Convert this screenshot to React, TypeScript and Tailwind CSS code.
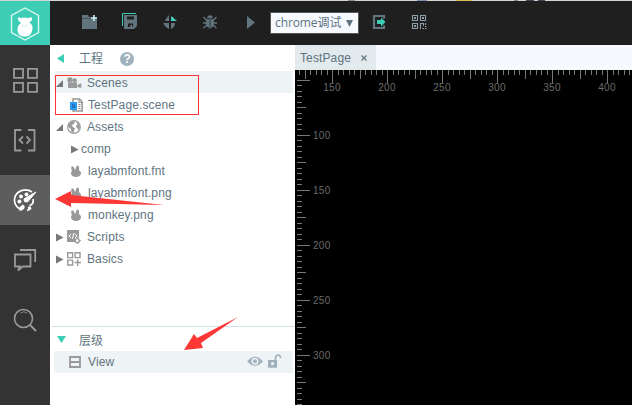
import type { ReactNode } from "react";

const range = (n: number) => Array.from({ length: n }, (_, i) => i);

function Arrow({ open }: { open?: boolean }) {
  return (
    <svg className="h-[9px] w-[8px] shrink-0" viewBox="0 0 8 9">
      <path d={open ? "M7 1V8H0Z" : "M0 0.5L7.5 4.5L0 8.5Z"} fill="#777" />
    </svg>
  );
}

function Rabbit() {
  return (
    <svg className="h-[14px] w-[14px] shrink-0" viewBox="0 0 14 14" fill="#999">
      <ellipse cx="7" cy="9.2" rx="5" ry="3.8" />
      <path d="M3.4 8C1.8 5 2 2.2 3.2 2.2C4.8 2.2 5.8 4.5 6 7ZM6.6 7C6.5 3.5 7.5 1.4 8.7 1.5C10.4 1.7 10.4 5 9.6 8Z" />
    </svg>
  );
}

function Camera() {
  return (
    <svg className="h-[14px] w-[15px] shrink-0" viewBox="0 0 15 14" fill="#999">
      <circle cx="3" cy="4" r="2.7" />
      <circle cx="7.7" cy="4.5" r="2.2" />
      <path d="M1 6.5H10V12H1ZM10.5 9L14.3 7V12L10.5 11Z" />
    </svg>
  );
}

function SceneFile() {
  return (
    <svg className="h-[14px] w-[14px] shrink-0" viewBox="0 0 14 14">
      <path d="M3 1H9.5L12.2 4V13H3Z" fill="#fff" stroke="#999" strokeWidth="1.6" />
      <path d="M9 1V4.5H12.5" fill="none" stroke="#999" strokeWidth="1.2" />
      <path d="M8.5 6.5H10.5M8.5 8.5H10.5M8.5 10.5H10.5" stroke="#888" />
      <rect y="4" width="7" height="8" fill="#2d9cf0" />
      <path d="M2.5 6V9.5H4.5V6" fill="none" stroke="#1c62a5" />
    </svg>
  );
}

function Globe() {
  return (
    <svg className="h-[14px] w-[14px] shrink-0" viewBox="0 0 14 14">
      <circle cx="7" cy="7" r="6.3" fill="#fff" stroke="#999" strokeWidth="1.2" />
      <path d="M1 5L5 1.2L8 1.5L7 4L4.5 5L6 7L8.2 8.5L7 10.5L6.5 13L4.5 12L4 9L1.5 7ZM9 2L12 4L13 7L11.5 10L10 8L8.7 6L10.5 4.8Z" fill="#999" />
    </svg>
  );
}

function Script() {
  return (
    <svg className="h-[14px] w-[14px] shrink-0" viewBox="0 0 14 14" fill="none">
      <path d="M0 0H12V8H8V12H0Z" fill="#999" />
      <path d="M4 4L1.8 6L4 8M8 4L10.2 6L8 8M7 3L5.2 9" stroke="#fff" />
      <circle cx="10.3" cy="10.7" r="2" stroke="#999" strokeWidth="1.3" />
      <path d="M10.3 7.5V9M10.3 12.5V14M7 10.7H8.5M12.3 10.7H14" stroke="#999" />
    </svg>
  );
}

function Basics() {
  return (
    <svg className="h-[14px] w-[14px] shrink-0" viewBox="0 0 14 14" fill="none" stroke="#999" strokeWidth="1.4">
      <path d="M0.7 0.7H5.6V5.6H0.7ZM8.1 0.7H13V5.6H8.1ZM0.7 8.1H5.6V13H0.7ZM7.5 10.5H14M10.7 7.5V14" />
    </svg>
  );
}

function Row({ arrow, icon, pad, gap, label, active }: { arrow?: "open" | "closed"; icon?: ReactNode; pad: string; gap: string; label: string; active?: boolean }) {
  return (
    <div className={`flex h-[22px] items-center pt-[2px] ${pad} ${active ? "bg-[#eef3f6]" : ""}`}>
      {arrow && <Arrow open={arrow === "open"} />}
      {icon && <span className={arrow ? "ml-[3px]" : ""}>{icon}</span>}
      <span className={`${gap} whitespace-nowrap`}>{label}</span>
    </div>
  );
}

function Logo() {
  return (
    <svg className="h-[34px] w-[30px]" viewBox="0 0 30 34">
      <path d="M15 1L28.5 8.5V25.5L15 33L1.5 25.5V8.5Z" fill="none" stroke="#d6f8f0" strokeWidth="1.4" />
      <path d="M8 12.5C7.2 10 9.5 9.5 11 11.2C13 10.2 16.5 10.2 18.5 11.2C20.5 9.5 23 10.5 22 12.8C21.5 14.5 20 14.5 19.5 15.5C23 18 23 21 22 24C21 28.5 18 29.5 15 29.5C11.5 29.5 8.5 28.5 7.7 24.5C7 20.5 8 18 11 16C10 14.5 8.5 14.5 8 12.5Z" fill="#fff" />
      <path d="M12 18.5Q15 20 18 18.5" fill="none" stroke="#b5efe2" strokeWidth="0.8" />
    </svg>
  );
}

function Toolbar() {
  return (
    <header className="flex h-[44px] bg-[#1f1f1f]">
      <div className="flex w-[50px] items-center justify-center bg-[#3dcdb7] pt-[1px]"><Logo /></div>
      <svg className="h-[44px] w-[220px]" viewBox="50 1 220 44">
        <path d="M82 15H88L89 17H97V29H82Z" fill="#62757f" />
        <path d="M82 18.5H91" stroke="#45545d" />
        <path d="M91 18H97M94 15V21" stroke="#c5e9f0" strokeWidth="1.7" />
        <path d="M122.5 26V13.5H136" fill="none" stroke="#3dcdb7" />
        <path d="M124 15H137V26L134 29H124Z" fill="#62757f" />
        <path d="M127 16.5H134V19.5H127ZM128 23.5H133V27H128Z" fill="#1f1f1f" />
        <path d="M130.5 25H132V27H130.5Z" fill="#7f929b" />
        <path d="M169 15V21H165Q165 20 169 15ZM163 23H169V29Q165 27 163 23ZM171 23H175Q175 27 171 29Z" fill="#62757f" />
        <path d="M171 16.5H172L177 21H171Z" fill="#3dcdb7" />
        <g fill="#62757f" stroke="#62757f">
          <path d="M207.5 17Q208 15.5 210 15.5T212.5 17V18H207.5ZM206.5 19.5H213.5V26L210 28.5L206.5 26Z" strokeWidth="0.5" />
          <path d="M203.5 17L207 20.5M216.5 17L213 20.5M203 23H217M203.5 28L207 25M216.5 28L213 25" fill="none" strokeWidth="1.4" />
          <path d="M210 20V28" stroke="#26343b" />
        </g>
        <path d="M247 16L255 22.5L247 29Z" fill="#62757f" />
      </svg>
      <div className="mt-[11px] flex h-[22px] w-[89px] items-center justify-between border border-[#56585a] bg-[#f6faff] pl-[4px] pr-[5px] text-[12px] text-[#5f747f] font-['Open_Sans','Noto_Sans_CJK_SC',sans-serif]">
        <span className="whitespace-nowrap tracking-[-0.1px]">chrome调试</span>
        <svg className="h-[7px] w-[7px]" viewBox="0 0 7 7"><path d="M0 0H7L3.5 7Z" fill="#5f747f" /></svg>
      </div>
      <svg className="h-[44px] w-[80px]" viewBox="359 1 80 44">
        <path d="M384 18.5V16H374V28H384V25.5" fill="none" stroke="#62757f" strokeWidth="2.2" />
        <path d="M377 20H381V17.5L385.5 22L381 26.5V24H377Z" fill="#3dcdb7" />
        <g fill="none" stroke="#8c9ea8" strokeWidth="1.1">
          <path d="M412.5 15.5H417.5V20.5H412.5ZM420.5 15.5H425.5V20.5H420.5ZM412.5 23.5H417.5V28.5H412.5Z" />
          <path d="M414 18H416M422 18H424M414 26H416" strokeWidth="2" />
          <path d="M420.5 29V23.5H423.5V26M425.5 23V25M425 26.5H426.5M422.5 28.5H424M425 28.5H426.5" />
        </g>
      </svg>
    </header>
  );
}

function SideNav() {
  return (
    <nav className="flex w-[50px] shrink-0 flex-col bg-[#333] pt-[5px]">
      {[
        <path key="a" d="M2 1.9H11V10.9H2ZM16 1.9H25V10.9H16ZM2 15.9H11V24.9H2ZM16 15.9H25V24.9H16Z" strokeWidth="1.8" />,
        <path key="b" d="M9.5 3H3V23.5H9.5M16 3H22.5V23.5H16M11 9.5L7.5 13L11 16.5M14.5 9.5L18 13L14.5 16.5" strokeWidth="1.8" />,
        <g key="c" stroke="#fff">
          <path d="M20 5C16 2 10 2 6 5.5C1 10 1.5 17 6.5 21C8.5 22.5 8 19.5 11 20M21 12C22 16 20 18 17.5 18.5M19 21Q17.5 23 15 23.5" strokeWidth="1.7" />
          <path d="M24 5L15.5 15L12.5 14.5L12 12Z" fill="#fff" strokeWidth="1" />
          <path d="M7 23C9 22 8 19 10.5 18C13 18 13 21 11 22.5Q9 24 7 23Z" fill="#fff" strokeWidth="0.5" />
          <g fill="#fff" stroke="none"><circle cx="7.5" cy="14.5" r="2" /><circle cx="9" cy="9.5" r="2" /><circle cx="14.5" cy="7.5" r="2" /><circle cx="17.5" cy="21" r="1.7" /></g>
        </g>,
        <path key="d" d="M8 3H23.2V15M3 7.5H18.5V19.5H11L6 23.5L8 19.5H3Z" strokeWidth="1.8" />,
        <g key="e"><circle cx="11.5" cy="11.5" r="9" strokeWidth="1.6" /><path d="M18 18L24 24" strokeWidth="2" /><path d="M8.5 6Q12 3.5 15 6" strokeWidth="0.8" /></g>,
      ].map((icon, i) => (
        <div key={i} className="flex h-[60px] items-center justify-center">
          <span className={`flex h-[50px] w-[50px] items-center justify-center ${i === 2 ? "bg-[#5d5d5d]" : ""}`}>
            <svg className="h-[26px] w-[26px]" viewBox="0 0 26 26" fill="none" stroke="#999">{icon}</svg>
          </span>
        </div>
      ))}
    </nav>
  );
}

function Ruler() {
  return (
    <svg className="block h-[335px] w-[337px] bg-black" viewBox="295 70 337 335">
      <g shapeRendering="crispEdges" fill="#777">
        {range(61).map((i) => {
          const x = Math.floor(299.5 + i * 5.5);
          const len = (i + 4) % 10 === 0 ? 13 : (i + 4) % 5 === 0 ? 9 : 5;
          return <rect key={i} x={x} y="70" width="1" height={len} />;
        })}
        {range(60).map((i) => {
          const y = Math.floor(80 + i * 5.5);
          const len = i % 10 === 0 ? 13 : i % 5 === 0 ? 9 : 5;
          return <rect key={i} x="297" y={y} width={len} height="1" />;
        })}
      </g>
      <g fill="#6b6b6b" className="text-[10px] tracking-[0.3px] font-['Liberation_Sans',sans-serif]">
        {[150, 200, 250, 300, 350, 400].map((v, i) => (
          <text key={v} x={332 + i * 55} y="91" textAnchor="middle">{v}</text>
        ))}
        {[100, 150, 200, 250, 300].map((v, i) => (
          <text key={v} x="313" y={139 + i * 55}>{v}</text>
        ))}
      </g>
    </svg>
  );
}

export default function App() {
  return (
    <div className="relative flex h-[405px] w-[632px] flex-col overflow-hidden bg-white text-[12px] tracking-[0.12px] text-[#5f747f] font-['Liberation_Sans','Noto_Sans_CJK_SC',sans-serif]">
      <div className="flex h-px shrink-0 bg-[#d3d6d3]">
        <span className="ml-[348px] w-[7px] bg-[#8d918f]" />
        <span className="ml-[62px] w-[10px] bg-[#7d8fae]" />
        <span className="ml-[29px] w-[16px] bg-[#d8bd59]" />
        <span className="ml-[42px] w-[4px] bg-[#8b8684]" />
        <span className="ml-[8px] w-[8px] bg-[#444457]" />
        <span className="ml-[4px] w-[7px] bg-[#444457]" />
      </div>
      <Toolbar />
      <div className="flex h-[360px]">
        <SideNav />
        <aside className="flex w-[245px] shrink-0 flex-col">
          <div className="flex h-[26px] items-center pl-[7px] pt-[1px]">
            <svg className="h-[9px] w-[7px]" viewBox="0 0 7 9"><path d="M7 0V9L0 4.5Z" fill="#3dcdb7" /></svg>
            <span className="ml-[15px] pt-[1px]">工程</span>
            <span className="ml-[17px] flex h-[14px] w-[14px] items-center justify-center rounded-full bg-[#9fb1bc] text-[12px] font-bold text-white">?</span>
          </div>
          <div className="ml-[4px] mr-[2px]">
            <Row arrow="open" icon={<Camera />} pad="pl-[2px]" gap="ml-[5px]" label="Scenes" active />
            <Row icon={<SceneFile />} pad="pl-[16px]" gap="ml-[4px]" label="TestPage.scene" />
            <Row arrow="open" icon={<Globe />} pad="pl-[2px]" gap="ml-[6px]" label="Assets" />
            <Row arrow="closed" pad="pl-[17px]" gap="ml-[2px]" label="comp" />
            <Row icon={<Rabbit />} pad="pl-[15px]" gap="ml-[5px]" label="layabmfont.fnt" />
            <Row icon={<Rabbit />} pad="pl-[15px]" gap="ml-[5px]" label="layabmfont.png" />
            <Row icon={<Rabbit />} pad="pl-[15px]" gap="ml-[5px]" label="monkey.png" />
            <Row arrow="closed" icon={<Script />} pad="pl-[2px]" gap="ml-[6px]" label="Scripts" />
            <Row arrow="closed" icon={<Basics />} pad="pl-[2px]" gap="ml-[6px]" label="Basics" />
          </div>
          <div className="ml-[2px] mt-[57px] flex h-[25px] items-center border-t border-[#d4e0e7] pl-[5px]">
            <svg className="h-[7px] w-[9px]" viewBox="0 0 9 7"><path d="M0 0H9L4.5 7Z" fill="#3dcdb7" /></svg>
            <span className="ml-[13px] pt-[3px]">层级</span>
          </div>
          <div className="ml-[4px] mr-[2px] flex h-[22px] items-center bg-[#eef3f6] pl-[15px]">
            <svg className="h-[12px] w-[12px]" viewBox="0 0 12 12"><path d="M1 1H11V11H1ZM1 6H11" fill="none" stroke="#999" strokeWidth="1.8" /></svg>
            <span className="ml-[7px]">View</span>
            <svg className="mb-[2px] ml-auto mr-[11px] h-[14px] w-[35px]" viewBox="0 0 35 14">
              <path d="M0 7.5Q8 -2 16 7.5Q8 16 0 7.5Z" fill="#9fb1bc" />
              <circle cx="8" cy="7.3" r="3.5" fill="#eef3f6" /><circle cx="8" cy="7.3" r="2" fill="#9fb1bc" />
              <path d="M21 6H30V13.7H21Z" fill="#9fb1bc" /><circle cx="25.5" cy="9.7" r="1.6" fill="#eef3f6" />
              <path d="M28.5 6V4Q28.5 1 31 1T33.7 4" fill="none" stroke="#9fb1bc" strokeWidth="1.6" />
            </svg>
          </div>
        </aside>
        <main className="w-[337px]">
          <div className="flex h-[25px] bg-[#f6faff]">
            <div className="flex w-[81px] items-center bg-[#e2eaed] pl-[5px]">
              <span>TestPage</span>
              <svg className="ml-auto mr-[9px] mt-[1px] h-[6px] w-[6px]" viewBox="0 0 6 6"><path d="M0.5 0.5L5.5 5.5M5.5 0.5L0.5 5.5" stroke="#5f747f" strokeWidth="1.1" /></svg>
            </div>
          </div>
          <Ruler />
        </main>
      </div>
      <div className="absolute left-[55px] top-[75px] h-[40px] w-[144px] border border-[#f33]" />
      <svg className="absolute left-0 top-0 h-[405px] w-[632px]" viewBox="0 0 632 405" fill="#fd3734">
        <path d="M55 199L71 191V195L164 205L71 203V207Z" />
        <path d="M184 350L194 334L197 338L238 317L201 343L203 348Z" />
      </svg>
    </div>
  );
}
